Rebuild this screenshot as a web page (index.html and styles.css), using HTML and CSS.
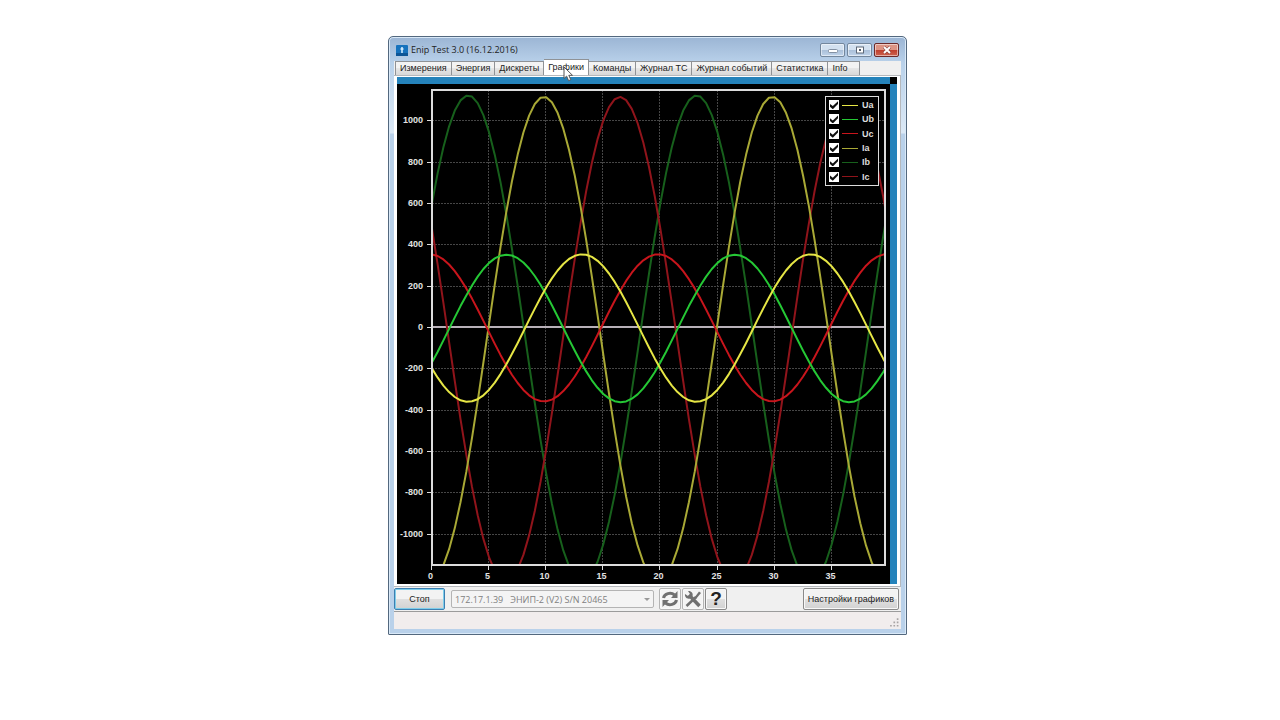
FILE: index.html
```html
<!DOCTYPE html>
<html lang="ru">
<head>
    <meta charset="UTF-8">
    <meta name="viewport" content="width=device-width, initial-scale=1.0">
    <title>Enip Test 3.0</title>
    <link rel="stylesheet" href="styles.css">
</head>
<body>
    <main class="window">
        <header class="titlebar">
            <svg class="app-icon" viewBox="0 0 12 11" aria-hidden="true">
                <rect width="12" height="11" rx="1" fill="#1672bd"/>
                <path d="M0 8h12v3H0z" fill="#0d5596"/>
                <path d="M6 2v6M4.5 4h3" stroke="#d8efff" stroke-width="1.5" fill="none"/>
            </svg>
            <h1>Enip Test 3.0 (16.12.2016)</h1>
            <div class="window-buttons">
                <button type="button" class="win-button" aria-label="Свернуть">
                    <svg viewBox="0 0 12 8"><rect x="1.5" y="3.5" width="9" height="3" rx="1" fill="#fff" stroke="#8391a3"/></svg>
                </button>
                <button type="button" class="win-button" aria-label="Развернуть">
                    <svg viewBox="0 0 12 8"><rect x="2.5" y="1" width="7" height="6" fill="#fff" stroke="#5c6878"/><rect x="5" y="3" width="2" height="2" fill="#4f5c6c"/></svg>
                </button>
                <button type="button" class="win-button close" aria-label="Закрыть">
                    <svg viewBox="0 0 12 8"><path d="M3 1l6 6M9 1L3 7" stroke="#7d3a36" stroke-width="3"/><path d="M3 1l6 6M9 1L3 7" stroke="#fff" stroke-width="2"/></svg>
                </button>
            </div>
        </header>

        <div class="client">
            <div class="tabs" role="tablist">
                <button type="button" class="tab" role="tab">Измерения</button>
                <button type="button" class="tab" role="tab">Энергия</button>
                <button type="button" class="tab" role="tab">Дискреты</button>
                <button type="button" class="tab active" role="tab" aria-selected="true">Графики
                    <svg class="pointer" viewBox="0 0 11 16" aria-hidden="true"><path d="M1 1v11.5l2.6-2.4 2 4.6 2.2-1-2-4.4H9.5z" fill="#fff" stroke="#555"/></svg>
                </button>
                <button type="button" class="tab" role="tab">Команды</button>
                <button type="button" class="tab" role="tab">Журнал ТС</button>
                <button type="button" class="tab" role="tab">Журнал событий</button>
                <button type="button" class="tab" role="tab">Статистика</button>
                <button type="button" class="tab" role="tab">Info</button>
            </div>

            <section class="page">
                <div class="band"><span class="band-corner"></span></div>
                <div class="chart-row">
                    <div class="chart-box">
                        <svg class="chart" id="chart" viewBox="0 0 493 500" role="img" aria-label="Графики токов и напряжений">
                            <defs>
                                <clipPath id="plot-area"><rect x="35" y="6" width="453" height="475"/></clipPath>
                            </defs>
                            <g id="grid"></g>
                            <g id="curves" clip-path="url(#plot-area)"></g>
                            <rect class="frame" x="35" y="6" width="453" height="475"/>
                        </svg>
                        <div class="legend">
                            <label><input type="checkbox" data-curve="Ua" checked><span class="line ua"></span>Ua</label>
                            <label><input type="checkbox" data-curve="Ub" checked><span class="line ub"></span>Ub</label>
                            <label><input type="checkbox" data-curve="Uc" checked><span class="line uc"></span>Uc</label>
                            <label><input type="checkbox" data-curve="Ia" checked><span class="line ia"></span>Ia</label>
                            <label><input type="checkbox" data-curve="Ib" checked><span class="line ib"></span>Ib</label>
                            <label><input type="checkbox" data-curve="Ic" checked><span class="line ic"></span>Ic</label>
                        </div>
                    </div>
                </div>
            </section>

            <div class="toolbar">
                <button type="button" class="button stop">Стоп</button>
                <div class="device">
                    <select aria-label="Устройство" disabled>
                        <option>172.17.1.39 &nbsp;&nbsp;ЭНИП-2 (V2) S/N 20465</option>
                    </select>
                </div>
                <div class="tools">
                    <button type="button" class="button tool" aria-label="Обновить" disabled>
                        <svg viewBox="0 0 18 18"><path d="M2.5 8a6.5 5.5 0 0 1 11-3M15.5 10a6.5 5.5 0 0 1-11 3" fill="none" stroke="#707070" stroke-width="3"/><path d="M16.5 1v7H10zM1.5 17v-7H8z" fill="#707070"/></svg>
                    </button>
                    <button type="button" class="button tool" aria-label="Настройки" disabled>
                        <svg viewBox="0 0 18 18"><path d="M5 5l10.5 11" stroke="#707070" stroke-width="3.5"/><path d="M1 4l3 2 2-2-2-3c3-.5 5.5 2 4.5 5L6 8.5C3 9.5.5 7 1 4z" fill="#707070"/><path d="M2.5 16L12 7" stroke="#707070" stroke-width="2.5"/><path d="M10.5 7.5L15 1.5l2 1.5-5 6z" fill="#707070"/></svg>
                    </button>
                    <button type="button" class="button tool help" aria-label="Справка">?</button>
                </div>
                <button type="button" class="button settings">Настройки графиков</button>
            </div>

            <footer class="statusbar">
                <svg class="grip" viewBox="0 0 9 9" aria-hidden="true"><path d="M7 1h1.5M4 4h1.5M7 4h1.5M1 7h1.5M4 7h1.5M7 7h1.5" stroke="#a8a4a4" stroke-width="1.5"/></svg>
            </footer>
        </div>
    </main>

    <script src="script.js"></script>
</body>
</html>
```
FILE: styles.css
```css
:root {
    --frame: #b9d1ea;
    --face: #f0f0f0;
    --blue: #2583bb;
    --grey-text: #808080;
    --ua: #e6e645;
    --ub: #25c835;
    --uc: #c8151c;
    --ia: #a9a936;
    --ib: #17601c;
    --ic: #90141b;
}

* {
    box-sizing: border-box;
}

body {
    margin: 0;
    padding: 36px 0 0 15px;
    background: #fff;
    color: #222;
    font-family: "Liberation Sans", Arial, sans-serif;
    font-size: 9px;
}

button,
select {
    font: inherit;
    color: inherit;
}

.window {
    width: 100%;
    max-width: 519px;
    margin: 0 auto;
    padding: 0 5px 5px;
    border: 1px solid #53687e;
    border-radius: 5px 5px 1px 1px;
    background: linear-gradient(#9bb5d4, var(--frame) 26px, #dce9f6 96px, var(--frame) 97px);
    box-shadow: inset 0 0 0 1px #d9e9f8;
}

.titlebar {
    display: flex;
    align-items: center;
    height: 24px;
    padding: 2px 2px 0;
}

.app-icon {
    width: 12px;
    height: 11px;
    margin-right: 3px;
}

.titlebar h1 {
    flex: 1;
    margin: 0;
    font-family: "Open Sans", sans-serif;
    font-size: 9px;
    font-weight: normal;
    line-height: 12px;
}

.window-buttons {
    display: flex;
    gap: 2px;
}

.win-button {
    display: flex;
    align-items: center;
    justify-content: center;
    width: 25px;
    height: 14px;
    padding: 0;
    border: 1px solid #73879d;
    border-radius: 2px;
    background: linear-gradient(#d3e1f0 50%, #a9bfd8 50%, #c0d4ea);
    box-shadow: inset 0 0 0 1px rgba(255, 255, 255, 0.5);
}

.win-button svg {
    width: 12px;
    height: 8px;
}

.win-button.close {
    border-color: #6b2a2a;
    background: linear-gradient(#dd9484 50%, #bf3e2c 50%, #cd6350);
}

.client {
    background: var(--face);
}

.tabs {
    display: flex;
    align-items: flex-end;
    height: 14px;
    padding-left: 1px;
}

.tab {
    height: 14px;
    padding: 0 4px;
    border: 1px solid #8f9296;
    border-left-width: 0;
    border-bottom: 0;
    background: linear-gradient(#f3f3f3 50%, #e6e6e6 50%, #d8d8d8);
    line-height: 13px;
    white-space: nowrap;
}

.tab:first-child {
    border-left-width: 1px;
}

.tab:last-child {
    min-width: 32px;
    text-align: left;
}

.tab.active {
    position: relative;
    height: 16px;
    background: #fff;
}

.pointer {
    position: absolute;
    top: 6px;
    left: 19px;
    z-index: 1;
    width: 11px;
    height: 16px;
}

.page {
    padding: 1px 3px 2px;
    border: 1px solid #b5b8bc;
    border-width: 1px 1px 1px 0;
    background: #fff;
}

.band {
    display: flex;
    justify-content: flex-end;
    height: 7px;
    background: var(--blue);
}

.band-corner {
    width: 7px;
    background: #000;
}

.chart-row {
    padding-right: 7px;
    background: var(--blue);
}

.chart-box {
    position: relative;
    background: #000;
}

.chart {
    display: block;
    width: 100%;
}

.chart text {
    fill: #e2e2e2;
    font-size: 9px;
    font-weight: bold;
}

.y-label {
    text-anchor: end;
}

.x-label {
    text-anchor: middle;
}

.frame {
    fill: none;
    stroke: #dcdcdc;
    stroke-width: 2;
}

.grid-line {
    stroke: #464646;
    stroke-dasharray: 2 1;
}

.tick {
    stroke: #dcdcdc;
}

.zero {
    stroke: #b8b0b8;
    stroke-width: 2;
}

.curve {
    fill: none;
    stroke-width: 2;
    stroke-linejoin: round;
}

.curve.ua { stroke: var(--ua); }
.curve.ub { stroke: var(--ub); }
.curve.uc { stroke: var(--uc); }
.curve.ia { stroke: var(--ia); }
.curve.ib { stroke: var(--ib); }
.curve.ic { stroke: var(--ic); }

.legend {
    position: absolute;
    top: 12px;
    right: 11px;
    display: grid;
    grid-template-rows: repeat(6, 1fr);
    width: 54px;
    height: 90px;
    padding: 1px 3px;
    border: 1px solid #dcdcdc;
    background: #000;
    color: #dcdcdc;
    font-size: 9px;
    font-weight: bold;
}

.legend label {
    display: flex;
    align-items: center;
}

.legend input {
    display: flex;
    justify-content: center;
    width: 10px;
    height: 10px;
    margin: 0 3px 0 0;
    appearance: none;
    background: #fff;
}

.legend input:checked::before {
    content: "";
    width: 8px;
    height: 8px;
    margin-top: 1px;
    background: #111;
    clip-path: polygon(0 35%, 35% 62%, 100% 0, 100% 35%, 35% 100%, 0 70%);
}

.line {
    width: 16px;
    height: 1px;
    margin-right: 4px;
}

.line.ua { background: var(--ua); }
.line.ub { background: var(--ub); }
.line.uc { background: var(--uc); }
.line.ia { background: var(--ia); }
.line.ib { background: var(--ib); }
.line.ic { background: var(--ic); }

.toolbar {
    display: flex;
    align-items: center;
    height: 24px;
    padding-right: 2px;
}

.button {
    height: 22px;
    padding: 0 4px;
    border: 1px solid #8a8a8a;
    border-radius: 2px;
    background: linear-gradient(#f3f3f3 50%, #e0e0e0 50%, #d2d2d2);
    box-shadow: inset 0 0 0 1px #f8f8f8;
    white-space: nowrap;
}

.button.stop {
    width: 51px;
    margin-right: 6px;
    border-color: #3c7fb1;
    box-shadow: inset 0 0 0 1px #7fcdea;
}

.device {
    position: relative;
    flex: 0 1 203px;
    margin-right: 5px;
}

.device select {
    display: block;
    width: 100%;
    height: 18px;
    padding: 0 3px;
    border: 1px solid #b4b4b4;
    border-radius: 2px;
    appearance: none;
    background: #f4f4f4;
    color: var(--grey-text);
    font-family: "Open Sans", sans-serif;
    opacity: 1;
}

.device::after {
    content: "";
    position: absolute;
    top: 8px;
    right: 4px;
    border: 3px solid transparent;
    border-top-color: #999;
    border-bottom: 0;
}

.tools {
    display: flex;
    gap: 1px;
}

.tool {
    display: flex;
    align-items: center;
    justify-content: center;
    width: 22px;
    padding: 0;
}

.tool:disabled {
    border-color: #b4b4b4;
    background: #f4f4f4;
}

.tool svg {
    width: 18px;
    height: 18px;
}

.tool.help {
    color: #222;
    font-size: 19px;
    font-weight: bold;
    line-height: 20px;
}

.button.settings {
    margin-left: auto;
}

.statusbar {
    display: flex;
    align-items: flex-end;
    justify-content: flex-end;
    height: 18px;
    padding: 0 2px 1px 0;
    border-top: 1px solid #9b9b9b;
    background: #f1eded;
}

.grip {
    width: 10px;
    height: 10px;
}
```
FILE: script.js
```js
const SVG_NS = 'http://www.w3.org/2000/svg';
const plot = { left: 35, right: 488, top: 6, bottom: 481, zero: 243 };
const scaleX = 11.42;
const scaleY = 0.2066;
const period = 20;

// peak: position of the maximum in ms, offset: constant component
const curves = [
    { name: 'Ib', peak: 3.17, amplitude: 1186, offset: -55, third: -10 },
    { name: 'Ic', peak: 16.46, amplitude: 1182, offset: -58, third: -10 },
    { name: 'Ia', peak: 9.8, amplitude: 1182, offset: -58, third: -10 },
    { name: 'Uc', peak: 19.8, amplitude: 356, offset: -4, third: 0 },
    { name: 'Ub', peak: 6.52, amplitude: 357, offset: -7, third: 0 },
    { name: 'Ua', peak: 13.15, amplitude: 357, offset: -5, third: 0 }
];

const toX = (t) => plot.left + t * scaleX;
const toY = (v) => plot.zero - v * scaleY;

function add(parent, tag, attributes, text) {
    const node = document.createElementNS(SVG_NS, tag);
    for (const key in attributes) {
        node.setAttribute(key, attributes[key]);
    }
    if (text !== undefined) {
        node.textContent = text;
    }
    parent.appendChild(node);
    return node;
}

function drawGrid() {
    const grid = document.getElementById('grid');

    for (let v = -1000; v <= 1000; v += 200) {
        const y = Math.round(toY(v)) + 0.5;
        add(grid, 'line', { class: 'grid-line', x1: plot.left, x2: plot.right, y1: y, y2: y });
        add(grid, 'line', { class: 'tick', x1: plot.left - 5, x2: plot.left, y1: y, y2: y });
        add(grid, 'text', { class: 'y-label', x: plot.left - 9, y: y + 2 }, v);
    }

    for (let t = 0; t < 40; t += 5) {
        const x = Math.round(toX(t)) - 0.5;
        if (t > 0) {
            add(grid, 'line', { class: 'grid-line', x1: x, x2: x, y1: plot.top, y2: plot.bottom });
        }
        add(grid, 'line', { class: 'tick', x1: x, x2: x, y1: plot.bottom, y2: plot.bottom + 5 });
        add(grid, 'text', { class: 'x-label', x: x - 1, y: plot.bottom + 14 }, t);
    }

    add(grid, 'line', { class: 'zero', x1: plot.left, x2: plot.right, y1: plot.zero, y2: plot.zero });
}

function drawCurves() {
    const group = document.getElementById('curves');

    for (const curve of curves) {
        const points = [];
        for (let t = 0; t <= 40; t += 0.5) {
            const angle = (t - curve.peak) / period * 2 * Math.PI;
            const value = curve.offset + curve.amplitude * Math.cos(angle) + curve.third * Math.cos(3 * angle);
            points.push(toX(t).toFixed(1) + ',' + toY(value).toFixed(1));
        }
        add(group, 'polyline', {
            id: 'curve-' + curve.name,
            class: 'curve ' + curve.name.toLowerCase(),
            points: points.join(' ')
        });
    }
}

drawGrid();
drawCurves();

document.querySelectorAll('.legend input').forEach((box) => {
    box.addEventListener('change', () => {
        document.getElementById('curve-' + box.dataset.curve).style.display = box.checked ? '' : 'none';
    });
});
```
